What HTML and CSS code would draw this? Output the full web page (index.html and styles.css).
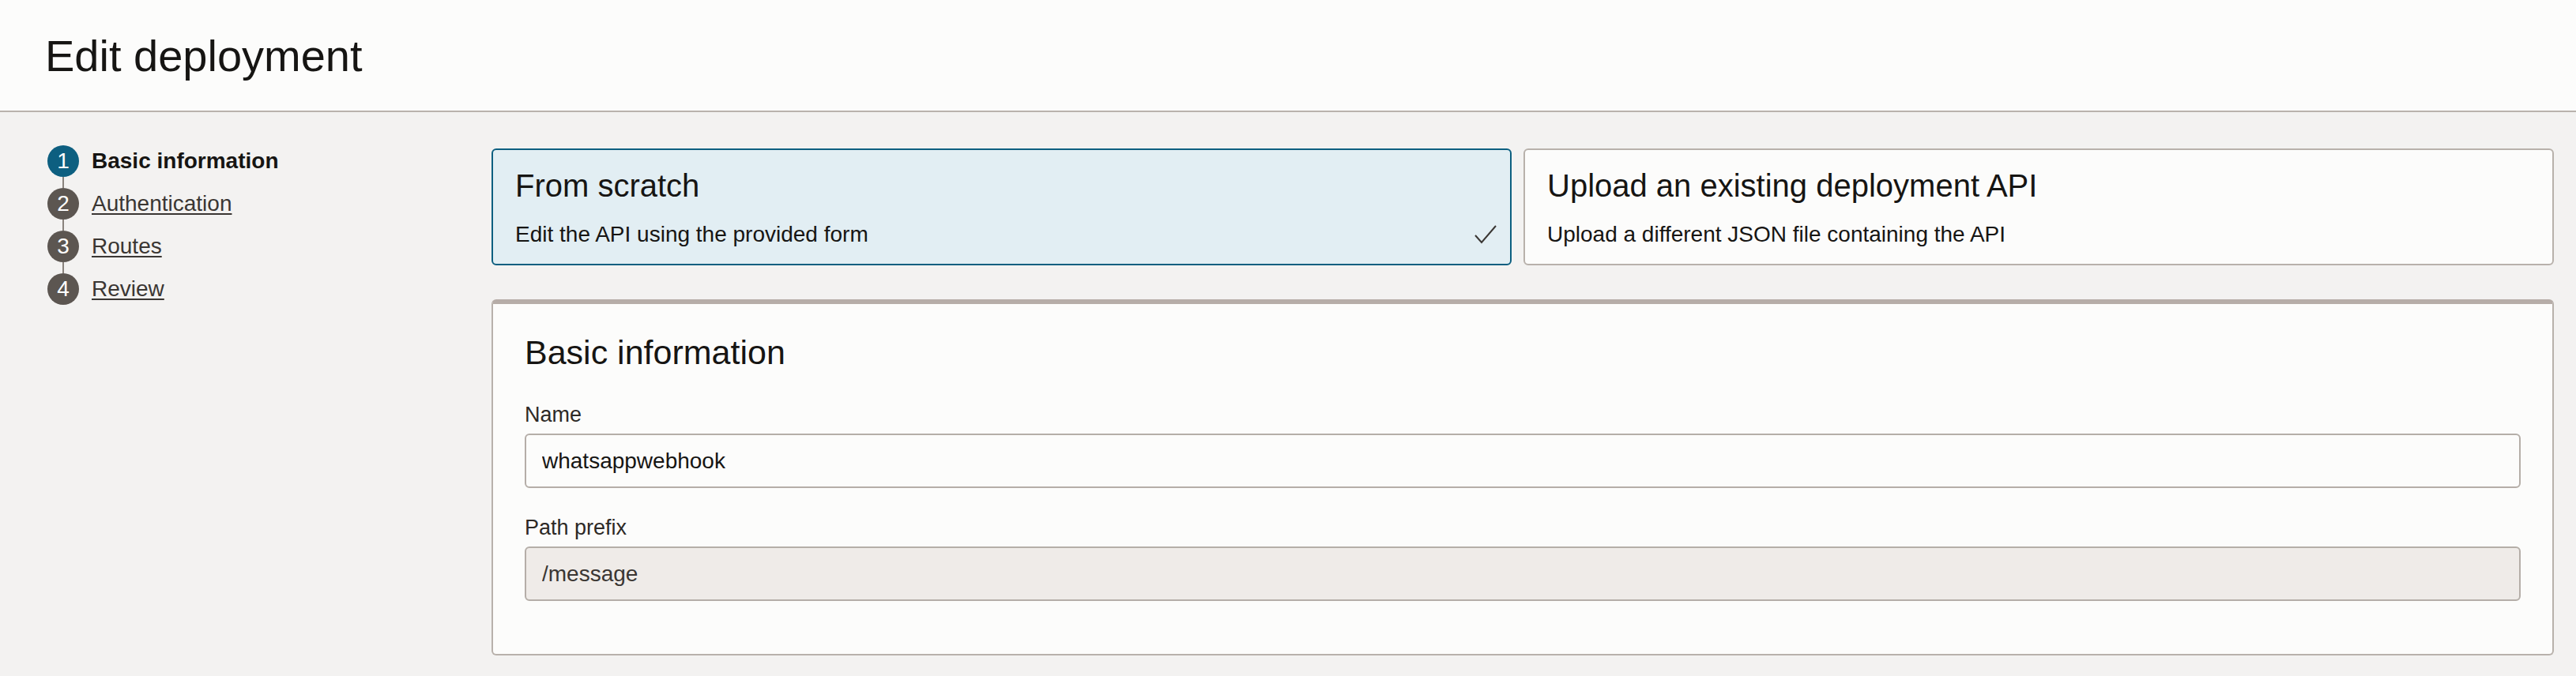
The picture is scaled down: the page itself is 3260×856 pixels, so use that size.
FILE: index.html
```html
<!DOCTYPE html>
<html lang="en">
<head>
<meta charset="utf-8">
<title>Edit deployment</title>
<link rel="stylesheet" href="styles.css">
</head>
<body>
<header class="page-header">
  <h1 class="page-title">Edit deployment</h1>
</header>
<div class="layout">
  <nav class="steps">
    <ol class="step-list">
      <li class="step step-current"><span class="step-num">1</span><span class="step-label">Basic information</span></li>
      <li class="step"><span class="step-num">2</span><a class="step-link" href="#">Authentication</a></li>
      <li class="step"><span class="step-num">3</span><a class="step-link" href="#">Routes</a></li>
      <li class="step"><span class="step-num">4</span><a class="step-link" href="#">Review</a></li>
    </ol>
  </nav>
  <main class="content">
    <div class="choices">
      <div class="choice choice-selected">
        <h2 class="choice-title">From scratch</h2>
        <div class="choice-desc-row">
          <p class="choice-desc">Edit the API using the provided form</p>
          <svg class="check" viewBox="0 0 28 24" aria-hidden="true"><polyline points="1,13 9,22 27,1"/></svg>
        </div>
      </div>
      <div class="choice">
        <h2 class="choice-title">Upload an existing deployment API</h2>
        <div class="choice-desc-row">
          <p class="choice-desc">Upload a different JSON file containing the API</p>
        </div>
      </div>
    </div>
    <section class="form-card">
      <h2 class="form-title">Basic information</h2>
      <div class="field">
        <label class="field-label" for="name">Name</label>
        <input class="field-input" id="name" type="text" value="whatsappwebhook">
      </div>
      <div class="field">
        <label class="field-label" for="prefix">Path prefix</label>
        <input class="field-input field-input-readonly" id="prefix" type="text" value="/message" readonly>
      </div>
    </section>
  </main>
</div>
</body>
</html>
```
FILE: styles.css
```css
* { box-sizing: border-box; }
html, body { margin: 0; }
body {
  font-family: "Liberation Sans", Arial, sans-serif;
  background: #f3f2f1;
  color: #161513;
  width: 3260px;
  height: 856px;
  overflow: hidden;
}
.page-header {
  background: #fcfcfb;
  border-bottom: 2px solid #b9b3ad;
  height: 142px;
  padding: 43px 0 0 57px;
}
.page-title {
  margin: 0;
  font-size: 56px;
  font-weight: 400;
  line-height: 56px;
}
.layout {
  display: grid;
  grid-template-columns: 622px 1fr;
}
.steps { padding: 42px 0 0 60px; }
.step-list {
  list-style: none;
  margin: 0;
  padding: 0;
  display: flex;
  flex-direction: column;
  gap: 14px;
}
.step {
  display: flex;
  align-items: center;
  gap: 16px;
  height: 40px;
  font-size: 28px;
  line-height: 40px;
}
.step-num {
  position: relative;
  flex: none;
  width: 40px;
  height: 40px;
  border-radius: 50%;
  background: #5c5651;
  color: #fff;
  display: flex;
  align-items: center;
  justify-content: center;
  font-size: 28px;
}
.step-current .step-num { background: #0d5f80; }
.step:not(:last-child) .step-num::after {
  content: "";
  position: absolute;
  left: 19px;
  top: 40px;
  width: 2px;
  height: 14px;
  background: #8a837d;
}
.step-label { font-weight: 700; color: #161513; }
.step-link {
  color: #3a3633;
  text-decoration: underline;
  text-decoration-thickness: 2px;
  text-underline-offset: 3px;
}
.content { padding: 46px 28px 0 0; }
.choices {
  display: grid;
  grid-template-columns: 1291fr 1304fr;
  gap: 15px;
}
.choice {
  border: 2px solid #b8b1ab;
  border-radius: 6px;
  background: #fcfcfb;
  padding: 21px 17px 19px 28px;
}
.choice-selected {
  background: #e2eef3;
  border-color: #0d5f80;
}
.choice-title {
  margin: 0 0 20px;
  font-size: 40px;
  font-weight: 400;
  line-height: 48px;
}
.choice-desc-row {
  display: flex;
  justify-content: space-between;
  align-items: center;
  height: 36px;
}
.choice-desc {
  margin: 0;
  font-size: 28px;
  line-height: 36px;
}
.check {
  flex: none;
  width: 28px;
  height: 24px;
  fill: none;
  stroke: #3a3633;
  stroke-width: 2;
}
.form-card {
  margin-top: 43px;
  background: #fcfcfb;
  border: 2px solid #b8b1ab;
  border-top: 6px solid #b6ada8;
  border-radius: 6px;
  padding: 36px 40px 67px;
}
.form-title {
  margin: 0 0 37px;
  font-size: 43px;
  font-weight: 400;
  line-height: 50px;
}
.field + .field { margin-top: 33px; }
.field-label {
  display: block;
  font-size: 27px;
  line-height: 34px;
  margin-bottom: 7px;
  color: #2d2926;
}
.field-input {
  display: block;
  width: 100%;
  height: 69px;
  margin: 0;
  border: 2px solid #b5aea8;
  border-radius: 6px;
  background: #fcfcfb;
  padding: 0 20px;
  font-family: "Liberation Sans", Arial, sans-serif;
  font-size: 28px;
  color: #161513;
  outline: none;
}
.field-input-readonly {
  background: #efebe8;
  color: #3a3633;
}
```
